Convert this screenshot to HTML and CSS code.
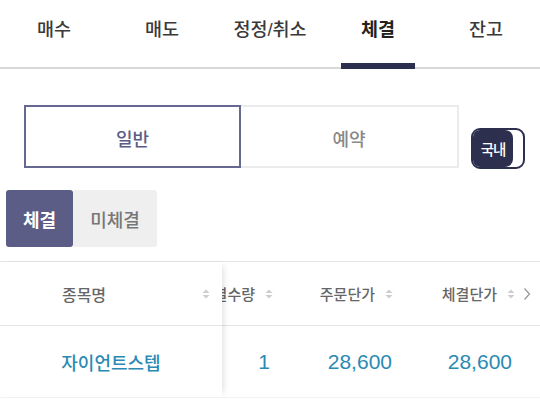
FILE: index.html
```html
<!DOCTYPE html>
<html lang="ko">
<head>
<meta charset="utf-8">
<link rel="stylesheet" href="styles.css">
</head>
<body>
<div class="tabs">
  <div class="tab">매수</div>
  <div class="tab">매도</div>
  <div class="tab">정정/취소</div>
  <div class="tab active">체결</div>
  <div class="tab">잔고</div>
</div>

<div class="seg-row">
  <div class="seg">
    <div class="seg-item on">일반</div>
    <div class="seg-item">예약</div>
  </div>
  <div class="toggle"><span class="knob">국내</span></div>
</div>

<div class="subtabs">
  <div class="sub on">체결</div>
  <div class="sub">미체결</div>
</div>

<div class="table">
  <div class="fixed">
    <div class="th fixed-th">
      <span class="lbl">종목명</span>
      <svg class="sort" width="8" height="12" viewBox="0 0 8 12"><polygon points="0.5,5 4,1.5 7.5,5"/><polygon points="0.5,7 4,10.5 7.5,7"/></svg>
    </div>
    <div class="td name">자이언트스텝</div>
  </div>
  <div class="scroll">
    <div class="col c1">
      <div class="th">체결수량<svg class="sort" width="8" height="12" viewBox="0 0 8 12"><polygon points="0.5,5 4,1.5 7.5,5"/><polygon points="0.5,7 4,10.5 7.5,7"/></svg></div>
      <div class="td num">1</div>
    </div>
    <div class="col c2">
      <div class="th">주문단가<svg class="sort" width="8" height="12" viewBox="0 0 8 12"><polygon points="0.5,5 4,1.5 7.5,5"/><polygon points="0.5,7 4,10.5 7.5,7"/></svg></div>
      <div class="td num">28,600</div>
    </div>
    <div class="col c3">
      <div class="th">체결단가<svg class="sort" width="8" height="12" viewBox="0 0 8 12"><polygon points="0.5,5 4,1.5 7.5,5"/><polygon points="0.5,7 4,10.5 7.5,7"/></svg></div>
      <div class="td num">28,600</div>
    </div>
    <div class="col c4">
      <div class="th more"><svg width="8" height="14" viewBox="0 0 8 14"><polyline points="1.5,1.5 6.5,7 1.5,12.5" fill="none" stroke="#9a9a9a" stroke-width="1.3"/></svg></div>
      <div class="td"></div>
    </div>
  </div>
</div>
</body>
</html>
```

FILE: styles.css
```css
* { box-sizing: border-box; }

body {
  margin: 0;
  background: #fff;
  font-family: "Liberation Sans", "Noto Sans CJK KR", sans-serif;
  color: #333;
}

.tabs {
  display: flex;
  height: 69px;
  border-bottom: 2px solid #d8d8d8;
}

.tab {
  position: relative;
  flex: 1;
  text-align: center;
  padding-top: 17px;
  line-height: 26px;
  font-size: 18.5px;
  font-weight: 500;
  color: #3a3a3a;
}

.tab.active {
  font-weight: bold;
  color: #222;
}

.tab.active::after {
  content: "";
  position: absolute;
  left: 17px;
  right: 17px;
  bottom: -2px;
  height: 6px;
  background: #2d2f4f;
}

.seg-row {
  display: flex;
  align-items: flex-end;
  margin: 36px 0 0 24px;
}

.seg {
  display: flex;
  height: 63px;
}

.seg-item {
  display: flex;
  align-items: center;
  justify-content: center;
  padding-top: 3px;
  width: 218px;
  font-size: 18px;
  font-weight: 500;
  color: #888;
  border: 2px solid #ebebeb;
  border-left: none;
}

.seg-item.on {
  width: 217px;
  color: #5b5d87;
  border: 2px solid #66688f;
}

.toggle {
  display: flex;
  width: 54px;
  height: 41px;
  margin: 0 0 -1px 12px;
  border: 2px solid #2d2f4f;
  border-radius: 9px;
  background: #fff;
  overflow: hidden;
}

.knob {
  display: flex;
  align-items: center;
  justify-content: center;
  width: 40px;
  height: 100%;
  background: #2d2f4f;
  border-radius: 0 8px 8px 0;
  color: #fff;
  font-size: 14.5px;
  font-weight: 500;
  letter-spacing: -1px;
}

.subtabs {
  display: flex;
  margin: 22px 0 0 6px;
}

.sub {
  display: flex;
  align-items: center;
  justify-content: center;
  height: 57px;
  width: 84px;
  font-size: 18px;
  font-weight: 500;
  color: #777;
  background: #efefef;
  border-radius: 0 3px 3px 0;
}

.sub.on {
  width: 67px;
  background: #5b5d87;
  color: #fff;
  font-weight: bold;
  border-radius: 3px;
}

.table {
  display: flex;
  margin-top: 14px;
  border-top: 1px solid #e4e4e4;
  border-bottom: 1px solid #f3f3f3;
}

.th {
  display: flex;
  align-items: center;
  justify-content: flex-end;
  height: 64px;
  border-bottom: 1px solid #e4e4e4;
  font-size: 15px;
  font-weight: 500;
  color: #666;
  padding-right: 5px;
}

.td {
  display: flex;
  align-items: center;
  justify-content: flex-end;
  height: 71px;
  padding-right: 8px;
  color: #2b8ab3;
}

.sort {
  fill: #cdcdcd;
  margin-left: 10px;
  flex-shrink: 0;
}

.fixed {
  position: relative;
  z-index: 1;
  width: 222px;
  flex-shrink: 0;
  background: #fff;
  box-shadow: 5px 0 7px -4px rgba(0, 0, 0, 0.14);
}

.fixed-th {
  justify-content: flex-start;
  padding-right: 12px;
  font-size: 16px;
}

.fixed-th .lbl {
  width: 168px;
  text-align: center;
}

.fixed-th .sort {
  margin-left: auto;
}

.td.name {
  justify-content: center;
  padding-right: 0;
  font-size: 18px;
  font-weight: 500;
}

.td.num {
  font-size: 21px;
}

.scroll {
  flex: 1;
  display: flex;
  justify-content: flex-end;
  overflow: hidden;
}

.col { flex-shrink: 0; }
.c1 { width: 120px; }
.c2 { width: 122px; }
.c3 { width: 120px; }
.c4 { width: 20px; }

.c2 .th { padding-right: 7px; }

.th.more {
  justify-content: flex-start;
  padding: 0 0 0 3px;
}
```
